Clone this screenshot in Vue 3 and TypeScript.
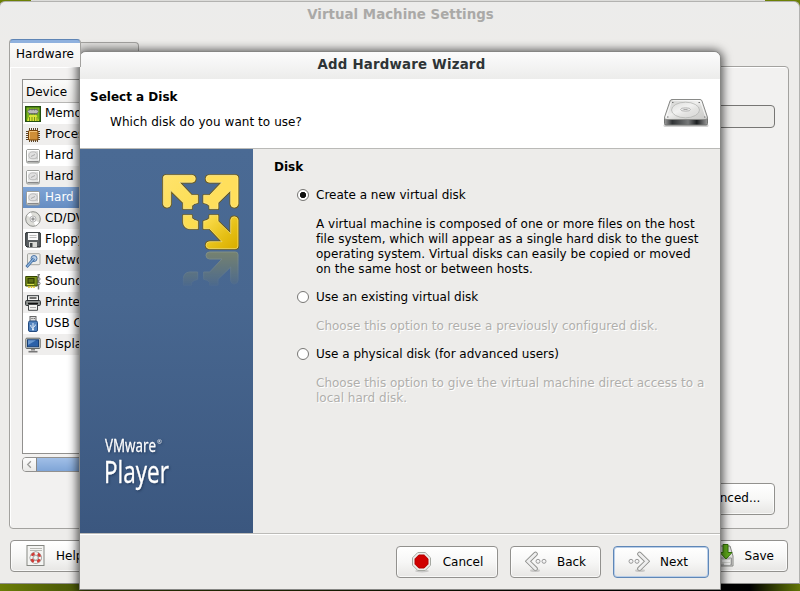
<script setup lang="ts">
import { ref } from 'vue'

interface Device {
  label: string
  icon: string
}

const drive =
  '<rect x="1.5" y="1.5" width="13" height="13.500" rx="1.500" fill="url(#silver)" stroke="#9c9e9a"/><path d="M2.500 13.500h11" stroke="#888" /><rect x="2.500" y="2.500" width="11" height="9.500" fill="none" stroke="#fff"/><ellipse cx="8" cy="7.300" rx="4.200" ry="3.500" fill="#e0e0e0" stroke="#b4b4b4" stroke-width=".8"/><path d="M6 8.500l4-2" stroke="#aaa" fill="none"/>'

const icons: Record<string, string> = {
  memory:
    '<rect x=".7" y=".7" width="14.600" height="14.600" fill="#79b51c" stroke="#24500f" stroke-width="1.400"/><path d="M2 15l2.500-6h7L14 15" fill="#d9e33a"/><path d="M4.500 15v-4M7 15v-4M9.500 15v-4M12 15v-4" stroke="#5b7d10" stroke-width=".8"/><path d="M4 3.500h8l1.500 2-1.500 2H4l-1.500-2z" fill="#bbb" stroke="#666" stroke-width=".8"/><path d="M4.500 2.500v2M7 2.500v2M9.500 2.500v2M12 2.500v2M4.500 7v2M7 7v2M9.500 7v2M12 7v2" stroke="#666" stroke-width=".8"/>',
  cpu:
    '<path d="M4.500 1v14M6.500 1v14M8.500 1v14M10.500 1v14M12.500 1v14M1 4.500h14M1 6.500h14M1 8.500h14M1 10.500h14M1 12.500h14" stroke="#4a3214" stroke-width=".9"/><rect x="3.500" y="3.500" width="9.500" height="9.500" rx="1" fill="#cf8f38" stroke="#7a4409"/><path d="M4.500 12V4.500H12" fill="none" stroke="#f0c27a"/>',
  drive,
  disc:
    '<circle cx="8" cy="8" r="7.300" fill="#deded9" stroke="#8b8c88"/><path d="M8 8L2 4.500A7 7 0 0 1 6 1.500zM8 8l6 3.500a7 7 0 0 1-4 3z" fill="#fff"/><circle cx="8" cy="8" r="3" fill="#eee" stroke="#aaa" stroke-width=".8"/><circle cx="8" cy="8" r="1.100" fill="#fff" stroke="#555" stroke-width=".8"/>',
  floppy:
    '<path d="M1 .7h14l.3.300v14H2L.7 13.700V1z" fill="#5b6063" stroke="#222729"/><rect x="3" y="1" width="10" height="7" fill="#fafafa"/><path d="M4.500 3.500h7M4.500 5.500h7" stroke="#bbb"/><rect x="4" y="10" width="8" height="5" fill="#d9dad7"/><rect x="5" y="11" width="2.500" height="4" fill="#3d4244"/>',
  network:
    '<rect x="2.500" y=".7" width="12.500" height="11" rx="1" fill="#ecece9" stroke="#a6a7a2"/><circle cx="9" cy="5.500" r="3" fill="#b8cee7" stroke="#4c74a6"/><path d="M9 5.500L1.500 14" stroke="#3d6a9e" stroke-width="2.800"/><path d="M9 5.500L2 13.500" stroke="#8fb4dd" stroke-width="1.200"/>',
  sound:
    '<path d="M.7 2.500h11.600v9.500H.7z" fill="#7a8f1c" stroke="#344600"/><rect x="3" y="4.500" width="6" height="4.500" fill="#5d6e14" stroke="#2e3b00"/><path d="M4 12v2M6.500 12v2M9 12v2" stroke="#d8c22b" stroke-width="1.500"/><path d="M2 10.500h7" stroke="#d8e04f"/><path d="M12.500.5H15M13.500 1v14.500" stroke="#777" stroke-width="1.500"/><circle cx="14" cy="5" r="1.200" fill="#ddd" stroke="#555" stroke-width=".6"/><circle cx="14" cy="9.500" r="1.200" fill="#ddd" stroke="#555" stroke-width=".6"/>',
  printer:
    '<rect x="2.500" y=".7" width="11" height="6" fill="#f5f5f3" stroke="#2f3436"/><path d="M4.500 3h7" stroke="#444" stroke-width="1.500"/><rect x=".6" y="5.500" width="14.800" height="5" rx="1" fill="#8c908e" stroke="#2b2f31"/><path d="M3 8.500h10" stroke="#111" stroke-width="1.500"/><path d="M3.500 9.500h9v5.800h-9z" fill="#f4f4f2" stroke="#454849"/><path d="M5 12.500h6" stroke="#aaa"/>',
  usb:
    '<rect x="5" y=".5" width="6" height="5" fill="#ddd" stroke="#666"/><path d="M6.500 2.500h1M8.700 2.500h1" stroke="#444"/><rect x="3.500" y="5" width="9" height="10.500" rx="1.500" fill="#5182bd" stroke="#234a7f"/><path d="M8 14V7M8 12.500L5.800 10.500V9M8 11.500l2.200-1.700V8.500" stroke="#e2edf9" fill="none"/><circle cx="8" cy="13.600" r="1" fill="#e2edf9"/>',
  display:
    '<rect x=".8" y="1.200" width="14.400" height="10.300" rx="1" fill="#d5d7d3" stroke="#666965"/><rect x="2.500" y="2.800" width="11" height="7" fill="#2c61a8" stroke="#183f75"/><path d="M3 3.300h8L3 8z" fill="#6997cf"/><path d="M6 12h4v1.500H6z" fill="#888"/><path d="M3.500 14.700h9" stroke="#777" stroke-width="1.600"/>',
}

const devices: Device[] = [
  { label: 'Memory', icon: 'memory' },
  { label: 'Processors', icon: 'cpu' },
  { label: 'Hard  Disk', icon: 'drive' },
  { label: 'Hard  Disk 2', icon: 'drive' },
  { label: 'Hard  Disk 3', icon: 'drive' },
  { label: 'CD/DVD', icon: 'disc' },
  { label: 'Floppy', icon: 'floppy' },
  { label: 'Network Adapter', icon: 'network' },
  { label: 'Sound Card', icon: 'sound' },
  { label: 'Printer', icon: 'printer' },
  { label: 'USB Controller', icon: 'usb' },
  { label: 'Display', icon: 'display' },
]
const selected = ref(4)

const options = [
  {
    id: 'new',
    label: 'Create a new virtual disk',
    lines: [
      'A virtual machine is composed of one or more files on the host',
      'file system, which will appear as a single hard disk to the guest',
      'operating system. Virtual disks can easily be copied or moved',
      'on the same host or between hosts.',
    ],
  },
  {
    id: 'existing',
    label: 'Use an existing virtual disk',
    lines: ['Choose this option to reuse a previously configured disk.'],
  },
  {
    id: 'physical',
    label: 'Use a physical disk (for advanced users)',
    lines: ['Choose this option to give the virtual machine direct access to a', 'local hard disk.'],
  },
]
const choice = ref('new')
</script>

<template>
  <div class="desktop">
    <section class="settings">
      <h1 class="settings-title">Virtual Machine Settings</h1>
      <div class="tabs">
        <div class="tab active">Hardware</div>
        <div class="tab">Options</div>
      </div>
      <div class="panel">
        <div class="left-col">
          <div class="list">
            <div class="list-head">Device</div>
            <div
              v-for="(d, i) in devices"
              :key="i"
              class="row"
              :class="{ odd: i % 2 === 1, selected: i === selected }"
              @click="selected = i"
            >
              <svg class="dev-icon" viewBox="0 0 16 16" v-html="icons[d.icon]"></svg>
              <span>{{ d.label }}</span>
            </div>
          </div>
          <div class="scrollbar">
            <div class="stepper">
              <svg viewBox="0 0 14 14"><path d="M8.500 3.500L5 7l3.500 3.500" fill="none" stroke="#9a9a98" stroke-width="1.300" /></svg>
            </div>
            <div class="thumb"></div>
          </div>
        </div>
        <div class="right-col">
          <div class="field"></div>
          <button class="btn advanced">Advanced...</button>
        </div>
      </div>
      <div class="settings-actions">
        <button class="btn help">
          <svg width="20" height="24" viewBox="0 0 20 24">
            <rect x="1" y="1.500" width="17" height="20" fill="#f4f4f2" stroke="#858782" />
            <path d="M4 4.500h12M4 6.500h12" stroke="#b9bab5" />
            <circle cx="9.700" cy="13.700" r="4.300" fill="none" stroke="#777" stroke-width="3.600" />
            <circle cx="9.700" cy="13.700" r="4.300" fill="none" stroke="#f2f2f0" stroke-width="2.600" />
            <circle cx="9.700" cy="13.700" r="4.300" fill="none" stroke="#cf3a35" stroke-width="2.600" stroke-dasharray="3.377" stroke-dashoffset="-1.690" />
            <circle cx="9.700" cy="13.700" r="2.300" fill="#f4f4f2" stroke="#999" stroke-width=".7" />
          </svg>
          <span>Help</span>
        </button>
        <button class="btn save">
          <svg width="26" height="24" viewBox="0 0 26 24">
            <path d="M5 2h16l3 10v10H3V12z" fill="#e3e3e0" stroke="#868783" />
            <path d="M4.500 14h18v7h-18z" fill="#d5d6d2" stroke="#999" />
            <path d="M13 17h8M15 20h6" stroke="#fff" stroke-width="1.500" />
            <path d="M14 .5h5v8h4l-6 6.500-6-6.500h3z" fill="#62b01c" stroke="#34720a" />
          </svg>
          <span>Save</span>
        </button>
      </div>
    </section>

    <section class="wizard">
      <h2 class="wizard-title">Add Hardware Wizard</h2>
      <header class="wizard-head">
        <div>
          <h3>Select a Disk</h3>
          <p>Which disk do you want to use?</p>
        </div>
        <svg class="disk" viewBox="0 0 48 32">
          <defs>
            <linearGradient id="silver" x1="0" y1="0" x2="1" y2="1">
              <stop offset="0" stop-color="#fdfdfd" />
              <stop offset="1" stop-color="#b8b9b6" />
            </linearGradient>
            <linearGradient id="lid" x1="0" y1="0" x2="1" y2="1">
              <stop offset="0" stop-color="#c6c6c4" />
              <stop offset=".45" stop-color="#efefee" />
              <stop offset=".6" stop-color="#dcdcda" />
              <stop offset="1" stop-color="#c9c9c7" />
            </linearGradient>
            <linearGradient id="edge">
              <stop offset="0" stop-color="#9c9c9c" />
              <stop offset=".18" stop-color="#303335" />
              <stop offset=".55" stop-color="#77797a" />
              <stop offset=".75" stop-color="#1b1e20" />
              <stop offset="1" stop-color="#9c9c9c" />
            </linearGradient>
          </defs>
          <path d="M3 28.500h42" stroke="#000" stroke-opacity=".18" stroke-width="3" stroke-linecap="round" />
          <path d="M2.500 20.500v6q0 1.500 1.500 1.500h40q1.500 0 1.500-1.500v-6z" fill="url(#edge)" stroke="#727472" />
          <path d="M10 2.500h28q1.500 0 2 1.500l5.400 16q.5 2.500-1.400 2.500H4q-1.900 0-1.400-2.500L8 4q.5-1.500 2-1.500z" fill="url(#lid)" stroke="#898a88" />
          <path d="M10.500 3.700h27q.8 0 1.200 1L44 20.500M9.400 4.600L4 20.500" fill="none" stroke="#fff" stroke-opacity=".8" />
          <ellipse cx="23.500" cy="13" rx="14" ry="7.800" fill="#fff" fill-opacity=".2" stroke="#b4b5b3" stroke-width=".8" />
          <ellipse cx="23.500" cy="12.500" rx="5" ry="1.700" fill="#e8e8e7" stroke="#aaa" stroke-width=".8" />
          <path d="M21.500 12.500h4" stroke="#aaa" />
          <path d="M10 5.500h1.500M36.500 5.500h1.500M5 20h1.500M42 20h1.500" stroke="#777" />
        </svg>
      </header>
      <div class="wizard-body">
        <aside class="brand">
          <svg class="brand-logo" viewBox="0 0 330 405">
            <defs>
              <linearGradient id="gold" gradientUnits="userSpaceOnUse" x1="40" y1="40" x2="270" y2="270">
                <stop offset="0" stop-color="#ffe36c" />
                <stop offset=".6" stop-color="#fbdc4c" />
                <stop offset="1" stop-color="#f0cc2c" />
              </linearGradient>
              <linearGradient id="gold-dark" gradientUnits="userSpaceOnUse" x1="130" y1="140" x2="50" y2="50">
                <stop offset="0" stop-color="#fbdc4c" />
                <stop offset=".6" stop-color="#e6c016" />
                <stop offset="1" stop-color="#dbb000" />
              </linearGradient>
              <linearGradient id="fade" gradientUnits="userSpaceOnUse" x1="0" y1="268" x2="0" y2="164">
                <stop offset="0" stop-color="#fff" stop-opacity=".48" />
                <stop offset="1" stop-color="#fff" stop-opacity=".04" />
              </linearGradient>
              <mask id="fade-mask" maskUnits="userSpaceOnUse" x="80" y="150" width="210" height="130">
                <rect x="80" y="150" width="210" height="130" fill="url(#fade)" />
              </mask>
              <path id="arrow" d="M40 54Q40 46 48 46H126Q136 47 136 56Q136 66 126 67H88L125 106H143V128Q132 129 125 137V146H100V128L62 91V132Q61 142 51 142Q41 141 40 132Z" />
              <path id="stub" d="M100 166H125V175Q133 182 143 184V206H118Q101 204 100 186Z" />
            </defs>
            <g fill="none" stroke="#6f5b14" stroke-width="7" stroke-linejoin="round">
              <use href="#arrow" /><use href="#arrow" transform="matrix(-1 0 0 1 304 0)" />
              <use href="#arrow" transform="matrix(-1 0 0 -1 304 312)" /><use href="#stub" />
            </g>
            <g fill="url(#gold)" stroke="#fff3a8" stroke-width="2">
              <use href="#arrow" /><use href="#stub" />
            </g>
            <g fill="#ffdf5c" stroke="#fff3a8" stroke-width="2">
              <use href="#arrow" transform="matrix(-1 0 0 1 304 0)" />
            </g>
            <g fill="url(#gold-dark)" stroke="#ffef90" stroke-width="2">
              <use href="#arrow" transform="matrix(-1 0 0 -1 304 312)" />
            </g>
            <g transform="matrix(1 0 0 -1 0 542)">
              <g mask="url(#fade-mask)" fill="#a9a04a" stroke="#c4bd78" stroke-width="3">
                <use href="#arrow" transform="matrix(-1 0 0 -1 304 312)" /><use href="#stub" />
              </g>
            </g>
          </svg>
          <svg class="brand-name" viewBox="0 0 100 75">
            <text class="vm" x="15" y="27" textLength="51" lengthAdjust="spacingAndGlyphs">VMware</text>
            <text class="reg" x="67" y="19">®</text>
            <text class="player" x="14" y="58" textLength="65" lengthAdjust="spacingAndGlyphs">Player</text>
          </svg>
        </aside>
        <main class="content">
          <h3>Disk</h3>
          <div v-for="o in options" :key="o.id" class="option" :class="{ off: choice !== o.id }">
            <label class="option-label" @click="choice = o.id">
              <span class="radio" :class="{ on: choice === o.id }"></span>{{ o.label }}
            </label>
            <p><span v-for="l in o.lines" :key="l" class="line">{{ l }}</span></p>
          </div>
        </main>
      </div>
      <footer class="wizard-foot">
        <button class="btn">
          <svg width="22" height="22" viewBox="0 0 22 22">
            <ellipse cx="11" cy="20" rx="7" ry="1.500" fill="#000" fill-opacity=".15" />
            <path d="M6.800 1.500h7.400l5.300 5.300v7.400l-5.300 5.300H6.800l-5.300-5.300V6.800z" fill="#eeeeec" stroke="#a5a8a1" />
            <path d="M7.800 4h5.400L17 7.800v5.400L13.200 17H7.800L4 13.200V7.800z" fill="#d00000" stroke="#b30000" />
          </svg>
          <span>Cancel</span>
        </button>
        <button class="btn back">
          <svg width="22" height="22" viewBox="0 0 22 22">
            <ellipse cx="10" cy="19.500" rx="5" ry="1.500" fill="#000" fill-opacity=".15" />
            <path d="M10.500 3L3 10.300l7.500 7.400" fill="none" stroke="#8f908d" stroke-width="4.600" stroke-linecap="round" />
            <path d="M10.500 3L3 10.300l7.500 7.400" fill="none" stroke="#eee" stroke-width="2.800" stroke-linecap="round" />
            <circle cx="13" cy="10.300" r="2" fill="#f4f4f4" stroke="#999" /><circle cx="19" cy="10.300" r="2" fill="#f4f4f4" stroke="#999" />
          </svg>
          <span>Back</span>
        </button>
        <button class="btn next">
          <svg width="22" height="22" viewBox="0 0 22 22">
            <ellipse cx="12" cy="19.500" rx="5" ry="1.500" fill="#000" fill-opacity=".15" />
            <path d="M11.500 3L19 10.300l-7.500 7.400" fill="none" stroke="#8f908d" stroke-width="4.600" stroke-linecap="round" />
            <path d="M11.500 3L19 10.300l-7.500 7.400" fill="none" stroke="#eee" stroke-width="2.800" stroke-linecap="round" />
            <circle cx="9" cy="10.300" r="2" fill="#f4f4f4" stroke="#999" /><circle cx="3" cy="10.300" r="2" fill="#f4f4f4" stroke="#999" />
          </svg>
          <span>Next</span>
        </button>
      </footer>
    </section>
  </div>
</template>

<style>
body {
  margin: 0;
  overflow: hidden;
}
</style>

<style scoped>
* {
  box-sizing: border-box;
}
h1,
h2,
h3,
p {
  margin: 0;
}
.desktop {
  position: relative;
  width: 800px;
  height: 591px;
  overflow: hidden;
  font: 12px/15px 'DejaVu Sans', sans-serif;
  color: #000;
  background:
    linear-gradient(90deg, #6c8005 0 31px, #dcdcda 31px 765px, #6c8005 765px) 0 0 / 100% 8px no-repeat,
    linear-gradient(90deg, #6b7d06 0, #4f5e07 60px, #303b05 300px, #080b02 520px, #000 750px, #465504 785px, #637506 800px);
}
.settings {
  position: absolute;
  left: -1px;
  top: 1px;
  width: 801px;
  height: 583px;
  border: 1px solid #b2b2b0;
  border-bottom-color: #8e8e8c;
  border-radius: 6px 6px 0 0;
  background: linear-gradient(#ececeb, #edecea 40px);
}
.settings-title {
  height: 37px;
  padding: 5px 0 0 2px;
  font-size: 13.33px;
  line-height: 15px;
  letter-spacing: 0.04px;
  text-align: center;
  color: #aaa9a7;
}
.tabs {
  display: flex;
  align-items: flex-end;
  height: 27px;
  padding-left: 9px;
}
.tab {
  width: 58px;
  height: 24px;
  padding: 9px 0 0 6px;
  border: 1px solid #a3a29f;
  border-bottom: 0;
  border-left: 0;
  border-radius: 0 4px 0 0;
  background: #dfdedc;
}
.tab.active {
  z-index: 1;
  width: 72px;
  height: 28px;
  margin-bottom: -1px;
  padding: 7px 0 0 6px;
  border-left: 1px solid #a3a29f;
  border-top: 1px solid #5f85b5;
  border-radius: 4px 4px 0 0;
  background: linear-gradient(#8fb1de 0 3px, #fbfbfa 3px, #f2f1f0 100%);
}
.panel {
  display: flex;
  justify-content: space-between;
  width: 780px;
  height: 463px;
  margin-left: 9px;
  border: 1px solid #a3a29f;
  border-radius: 0 4px 4px 4px;
  background: #f2f1f0;
  box-shadow: inset 1px 1px #fff;
}
.left-col {
  width: 200px;
  padding: 12px 0 0 12px;
}
.list {
  height: 375px;
  border: 1px solid #91908e;
  background: #fff;
}
.list-head {
  height: 23px;
  padding: 5px 0 0 3px;
  border-bottom: 1px solid #b7b6b4;
  background: linear-gradient(#fbfbfa, #eeedeb);
}
.row {
  display: flex;
  align-items: center;
  gap: 4px;
  height: 21px;
  padding-left: 2px;
  white-space: pre;
}
.row.odd {
  background: #efeeed;
}
.row.selected {
  color: #fff;
  background: linear-gradient(#7fa4d5, #658dc2);
}
.dev-icon {
  width: 16px;
  height: 16px;
}
.scrollbar {
  display: flex;
  height: 15px;
  margin-top: 3px;
  border: 1px solid #92918f;
  border-radius: 4px;
  overflow: hidden;
}
.stepper {
  width: 14px;
  border-right: 1px solid #888;
  background: linear-gradient(#fdfdfd, #e9e8e6);
}
.stepper svg {
  display: block;
  width: 13px;
  height: 13px;
}
.thumb {
  flex: 1;
  background: linear-gradient(#a1bfe7, #7fa5d7);
}
.right-col {
  display: flex;
  flex-direction: column;
  align-items: flex-end;
  width: 300px;
  padding: 38px 13px 13px 0;
}
.field {
  width: 200px;
  height: 23px;
  margin-bottom: auto;
  border: 1px solid #777674;
  border-radius: 4px;
  background: #edecea;
}
.btn {
  display: flex;
  align-items: center;
  justify-content: center;
  gap: 10px;
  height: 32px;
  margin: 0;
  padding: 0;
  border: 1px solid #92918e;
  border-radius: 4px;
  font: inherit;
  color: #000;
  background: linear-gradient(#fff, #f7f7f6 50%, #e7e6e4);
  box-shadow: inset 0 0 0 1px rgba(255, 255, 255, 0.7);
}
.advanced {
  width: 100px;
  padding-bottom: 1px;
}
.settings-actions {
  display: flex;
  justify-content: space-between;
  padding: 11px 11px 0 10px;
}
.help,
.save {
  width: 102px;
}
.help {
  justify-content: flex-start;
  padding-left: 15px;
}
.save {
  justify-content: flex-end;
  padding-right: 13px;
}
.wizard {
  position: absolute;
  left: 79px;
  top: 51px;
  display: flex;
  flex-direction: column;
  width: 642px;
  height: 539px;
  border: 1px solid #868684;
  border-radius: 7px 7px 0 0;
  background: #edecea;
  box-shadow: 0 1px 10px 2px rgba(0, 0, 0, 0.65);
}
.wizard-title {
  height: 27px;
  padding: 5px 0 0 3px;
  border-radius: 6px 6px 0 0;
  font-size: 13.33px;
  line-height: 16px;
  letter-spacing: 0.2px;
  text-align: center;
  color: #2e3436;
  background: linear-gradient(#fcfcfc, #ececeb);
}
h3 {
  font-size: 12px;
  line-height: 15px;
}
.wizard-head {
  display: flex;
  justify-content: space-between;
  height: 70px;
  padding: 11px 11px 0 10px;
  border-bottom: 1px solid #babab7;
  background: #fff;
}
.wizard-head p {
  padding: 10px 0 0 20px;
  letter-spacing: 0.06px;
}
.disk {
  width: 48px;
  height: 32px;
  margin: 7px -1px 0 0;
}
.wizard-body {
  display: flex;
  height: 384px;
}
.brand {
  display: flex;
  flex-direction: column;
  justify-content: space-between;
  width: 173px;
  padding: 11px 0 33px;
  background: linear-gradient(#4a6a94, #486790 40%, #3b577f);
}
.brand-logo {
  width: 110px;
  height: 135px;
  margin-left: 70px;
}
.brand-name {
  width: 100px;
  height: 75px;
  margin-left: 10px;
  overflow: visible;
  fill: #fff;
  stroke: #fff;
  stroke-width: 0.35px;
  font-family: 'Open Sans', sans-serif;
  filter: drop-shadow(1px 1px 1px rgba(20, 40, 70, 0.6));
}
.vm {
  font-size: 19px;
}
.player {
  font-size: 31px;
}
.reg {
  font-size: 6px;
  stroke: none;
}
.content {
  flex: 1;
  padding: 11px 0 0 21px;
}
.option {
  padding-left: 23px;
}
.option-label {
  display: flex;
  align-items: center;
  gap: 7px;
  height: 15px;
  margin-top: 13px;
}
.radio {
  width: 12px;
  height: 12px;
  margin-bottom: 2px;
  border: 1px solid #777674;
  border-radius: 50%;
  background: #fff;
}
.radio.on {
  background: radial-gradient(circle, #111 0 2.6px, #333 2.9px, #fff 3.5px);
}
.option p {
  padding: 14px 0 0 19px;
  letter-spacing: 0.015px;
}
.line {
  display: block;
  white-space: nowrap;
}
.off p {
  color: #b0afac;
  text-shadow: 1px 1px #fff;
}
.wizard-foot {
  display: flex;
  justify-content: flex-end;
  gap: 12px;
  flex: 1;
  padding: 12px 11px 0 0;
  border-top: 1px solid #bcbbb8;
  box-shadow: inset 0 1px #fff;
}
.wizard-foot .btn {
  width: 102px;
}
.wizard-foot .back {
  width: 91px;
}
.wizard-foot .next {
  width: 96px;
  padding-right: 6px;
  border-color: #5f87b7;
  box-shadow: inset 0 0 0 1px #b9cee8;
}
</style>
